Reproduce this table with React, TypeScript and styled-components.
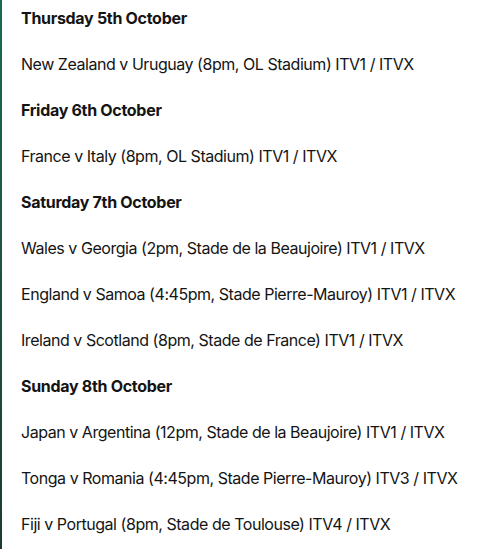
import styled, { createGlobalStyle } from 'styled-components';

interface Fixture {
    day: string;
    matches: string[];
}

const fixtures: Fixture[] = [
    {
        day: 'Thursday 5th October',
        matches: ['New Zealand v Uruguay (8pm, OL Stadium) ITV1 / ITVX'],
    },
    {
        day: 'Friday 6th October',
        matches: ['France v Italy (8pm, OL Stadium) ITV1 / ITVX'],
    },
    {
        day: 'Saturday 7th October',
        matches: [
            'Wales v Georgia (2pm, Stade de la Beaujoire) ITV1 / ITVX',
            'England v Samoa (4:45pm, Stade Pierre-Mauroy) ITV1 / ITVX',
            'Ireland v Scotland (8pm, Stade de France) ITV1 / ITVX',
        ],
    },
    {
        day: 'Sunday 8th October',
        matches: [
            'Japan v Argentina (12pm, Stade de la Beaujoire) ITV1 / ITVX',
            'Tonga v Romania (4:45pm, Stade Pierre-Mauroy) ITV3 / ITVX',
            'Fiji v Portugal (8pm, Stade de Toulouse) ITV4 / ITVX',
        ],
    },
];

const GlobalStyle = createGlobalStyle`
    html, body {
        margin: 0;
        padding: 0;
        background: #ffffff;
    }
`;

function App() {
    return (
        <>
            <GlobalStyle />
            <Article>
                {fixtures.map((f) => (
                    <DayGroup key={f.day}>
                        <DayHeading>{f.day}</DayHeading>
                        {f.matches.map((m) => (
                            <Match key={m}>{m}</Match>
                        ))}
                    </DayGroup>
                ))}
            </Article>
        </>
    );
}

const Article = styled.div`
    min-height: 549px;
    box-sizing: border-box;
    border-left: 2px solid;
    border-image: linear-gradient(to bottom, #1a6a55, #1d3b34) 1;
    padding: 5px 0 0 19px;
    font-family: Inter, 'Liberation Sans', sans-serif;
    font-size: 16px;
    line-height: 26px;
    color: #141414;
`;

const DayGroup = styled.section`
    display: flex;
    flex-direction: column;
    gap: 20px;
    margin-bottom: 20px;
`;

const DayHeading = styled.p`
    margin: 0;
    font-weight: 700;
    letter-spacing: -0.3px;
`;

const Match = styled.p`
    margin: 0;
    font-weight: 400;
    letter-spacing: -0.46px;
    white-space: nowrap;
`;

export default App;
